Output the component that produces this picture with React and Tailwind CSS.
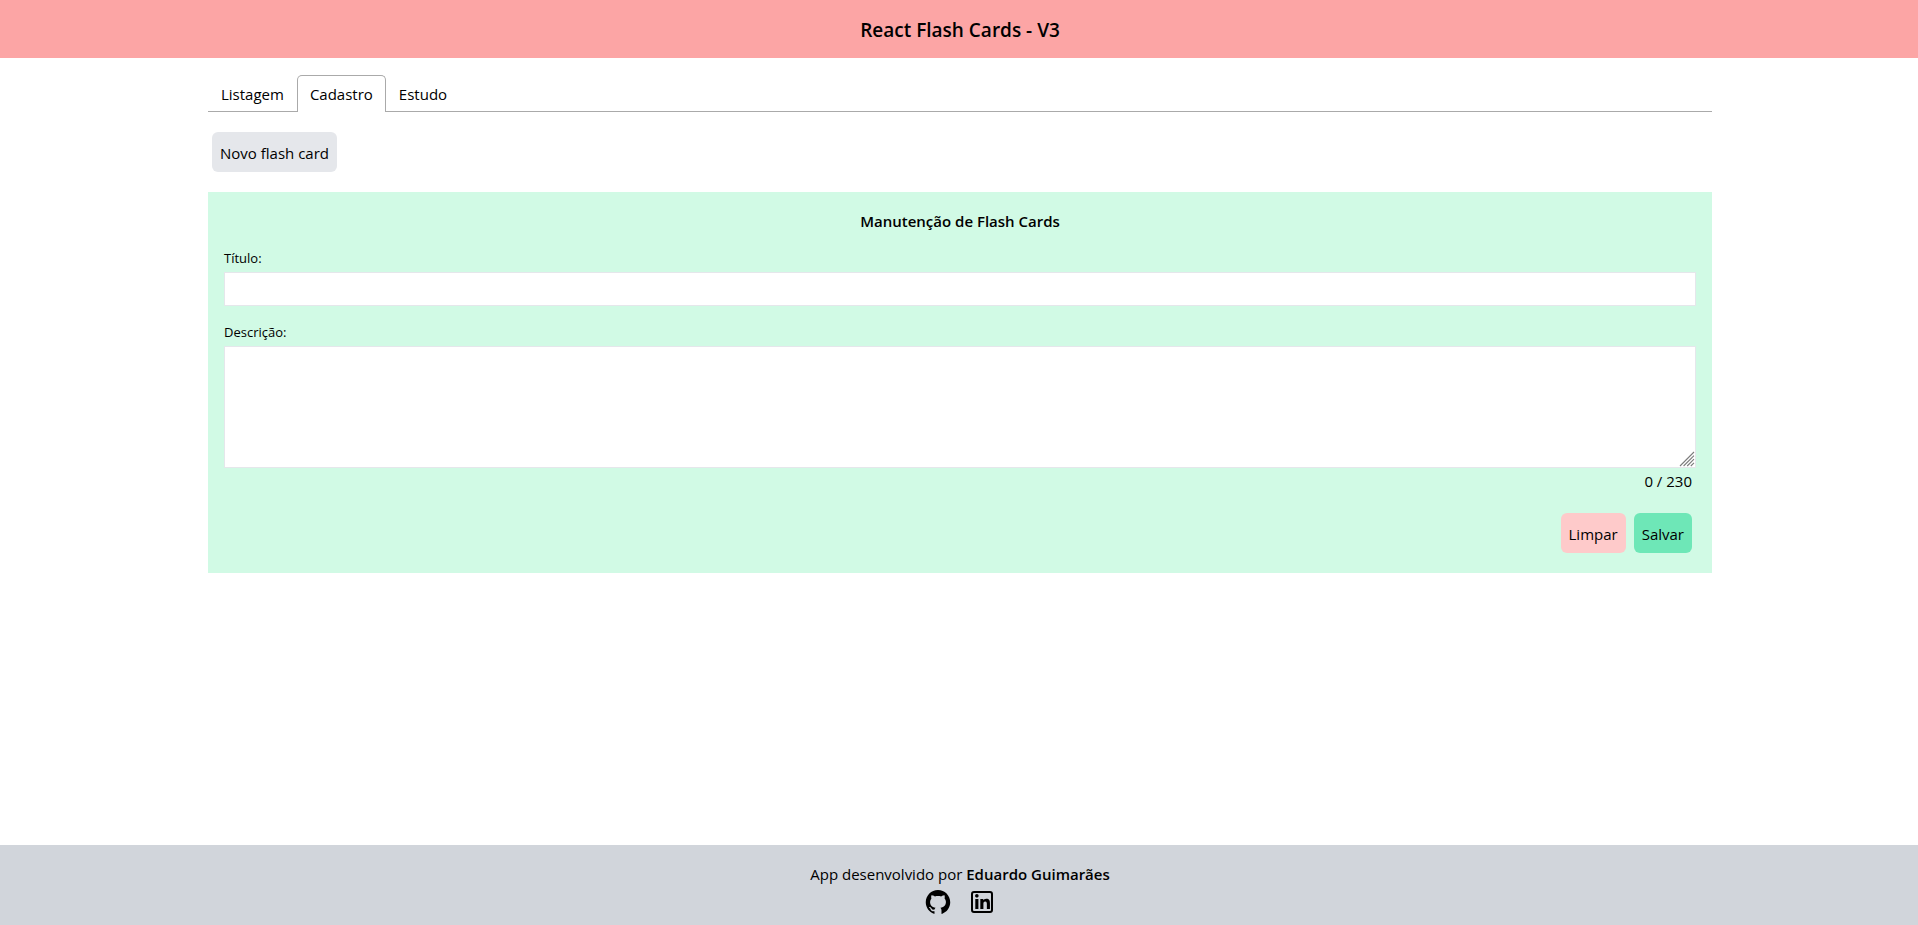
import { useState } from "react";
import { AiFillGithub } from "react-icons/ai";
import { FaLinkedinIn } from "react-icons/fa";

const TABS = ["Listagem", "Cadastro", "Estudo"];
const MAX_LENGTH = 230;

function Header() {
  return (
    <header className="bg-[#fca5a5] pt-[17px] pb-[15px] pl-0.5 text-center">
      <h1 className="text-[19px] leading-[26px] font-semibold">React Flash Cards - V3</h1>
    </header>
  );
}

function TabList({ active, onSelect }) {
  return (
    <div role="tablist" className="flex border-b border-[#aaaaaa]">
      {TABS.map((tab) => (
        <button
          key={tab}
          type="button"
          role="tab"
          aria-selected={tab === active}
          onClick={() => onSelect(tab)}
          className={
            tab === active
              ? "-mb-px rounded-t-[5px] border border-b-0 border-[#aaaaaa] bg-white px-3 py-1.5"
              : "-mb-px border border-b-0 border-transparent px-3 py-1.5"
          }
        >
          {tab}
        </button>
      ))}
    </div>
  );
}

/* Diagonal grip drawn over the corner of the resizable text area. */
function ResizeGrip() {
  return (
    <svg
      aria-hidden="true"
      viewBox="0 0 16 16"
      className="pointer-events-none absolute right-px bottom-px size-4 bg-white"
    >
      <path
        d="M1 15 15 1M4.6 15 15 4.6M8.2 15 15 8.2M11.8 15 15 11.8"
        fill="none"
        stroke="#7c7c7c"
        strokeWidth="1.1"
      />
    </svg>
  );
}

function CardForm() {
  const [title, setTitle] = useState("");
  const [description, setDescription] = useState("");

  function clear() {
    setTitle("");
    setDescription("");
  }

  return (
    <form
      onSubmit={(event) => event.preventDefault()}
      className="mt-5 flex flex-col bg-[#d1fae5] px-4 pt-[17px] pb-5"
    >
      <h2 className="mb-[15px] text-center font-semibold">Manutenção de Flash Cards</h2>
      <label htmlFor="title" className="mb-1 text-[13px] leading-5">
        Título:
      </label>
      <input
        id="title"
        type="text"
        value={title}
        onChange={(event) => setTitle(event.target.value)}
        className="mb-4 h-[34px] border border-[#e5e7eb] bg-white p-1"
      />
      <label htmlFor="description" className="mb-1 text-[13px] leading-5">
        Descrição:
      </label>
      <div className="relative">
        <textarea
          id="description"
          maxLength={MAX_LENGTH}
          value={description}
          onChange={(event) => setDescription(event.target.value)}
          className="block h-[122px] w-full resize-y border border-[#e5e7eb] bg-white p-1"
        />
        <ResizeGrip />
      </div>
      <div className="mt-px mr-1 text-right">
        {description.length} / {MAX_LENGTH}
      </div>
      <div className="mt-5 mr-1 flex justify-end gap-2">
        <button type="button" onClick={clear} className="h-10 rounded-md bg-[#fecaca] px-2 pt-0.5">
          Limpar
        </button>
        <button type="submit" className="h-10 rounded-md bg-[#6ee7b7] px-2 pt-0.5">
          Salvar
        </button>
      </div>
    </form>
  );
}

function Footer() {
  return (
    <footer className="flex flex-col items-center bg-[#d1d5db] pt-[17px] pb-[9px] pl-0.5">
      <p>
        App desenvolvido por <strong className="font-semibold">Eduardo Guimarães</strong>
      </p>
      <div className="mt-0.5 flex gap-4">
        <a href="#github" aria-label="GitHub">
          <AiFillGithub size={28} />
        </a>
        <a href="#linkedin" aria-label="LinkedIn" className="flex size-7 items-center justify-center">
          <span className="flex size-[22px] items-center justify-center rounded-[3px] border-2 border-black">
            <FaLinkedinIn size={17} />
          </span>
        </a>
      </div>
    </footer>
  );
}

export default function App() {
  const [tab, setTab] = useState("Cadastro");

  return (
    <div className="flex min-h-screen flex-col bg-white font-['Open_Sans','Noto_Sans',sans-serif] text-[15px] leading-6 text-black">
      <Header />
      <main className="flex-1 pt-[17px] pl-0.5">
        <div className="mx-auto max-w-[1536px] px-4">
          <TabList active={tab} onSelect={setTab} />
          <div className="mt-5 ml-1">
            <button type="button" className="block h-10 rounded-md bg-[#e5e7eb] px-2 pt-0.5">
              Novo flash card
            </button>
          </div>
          <CardForm />
        </div>
      </main>
      <Footer />
    </div>
  );
}
